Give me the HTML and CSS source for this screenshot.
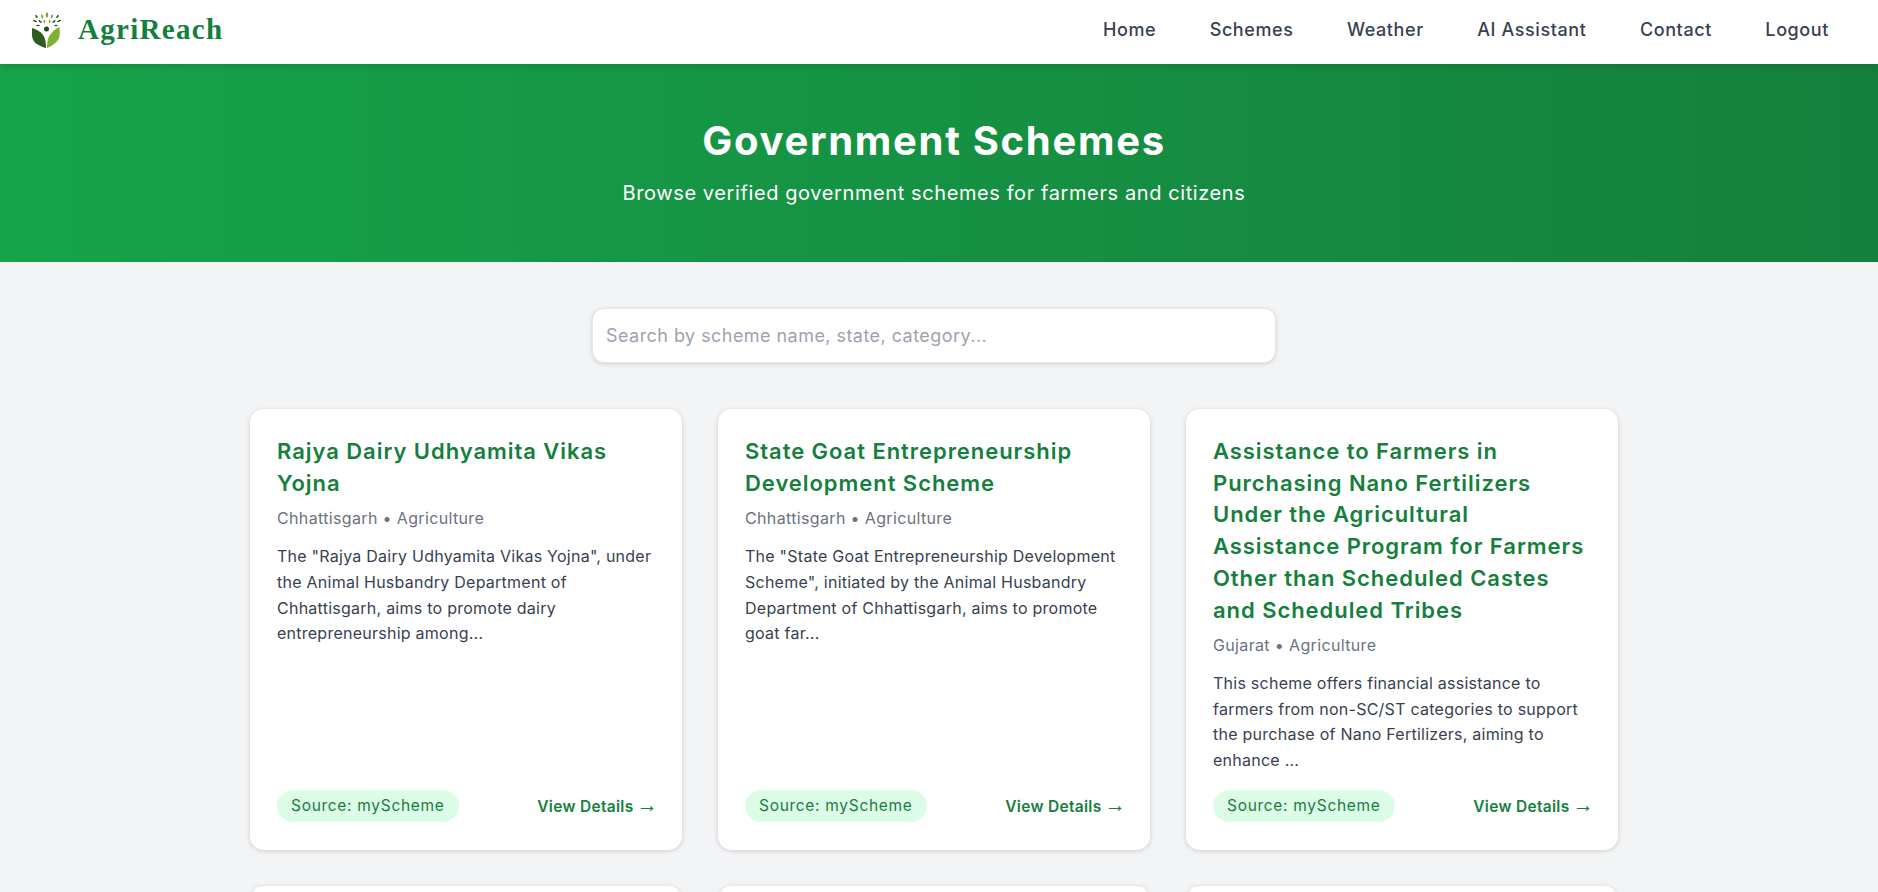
FILE: index.html
```html
<!DOCTYPE html>
<html lang="en">
<head>
    <meta charset="UTF-8">
    <meta name="viewport" content="width=device-width, initial-scale=1.0">
    <title>Government Schemes - AgriReach</title>
    <link rel="stylesheet" href="styles.css">
</head>
<body>
    <header class="navbar">
        <a class="brand" href="#">
            <svg class="brand-logo" viewBox="0 0 30 36" aria-hidden="true">
                <g fill="#6fa52c">
                    <path d="M15 0c1.600 1.600 1.600 4 0 6-1.600-2-1.600-4.400 0-6z"/>
                    <path d="M9.500 2c1.500 1 2 3 1.300 4.800-1.600-1-2.200-3-1.300-4.800z"/>
                    <path d="M20.500 2c-1.500 1-2 3-1.300 4.800 1.600-1 2.200-3 1.300-4.800z"/>
                    <path d="M12 7.500c1.300 1 1.500 2.600.8 4-1.300-1-1.600-2.600-.8-4z"/>
                    <path d="M18 7.500c-1.300 1-1.500 2.600-.8 4 1.300-1 1.600-2.600.8-4z"/>
                </g>
                <g fill="#2f5d1e">
                    <ellipse cx="4.500" cy="4.500" rx="1" ry="1.700" transform="rotate(-35 4.500 4.500)"/>
                    <ellipse cx="25.500" cy="4.500" rx="1" ry="1.700" transform="rotate(35 25.500 4.500)"/>
                    <ellipse cx="3" cy="9" rx="2.300" ry=".9" transform="rotate(20 3 9)"/>
                    <ellipse cx="27" cy="9" rx="2.300" ry=".9" transform="rotate(-20 27 9)"/>
                    <ellipse cx="8" cy="9.500" rx="2" ry=".9" transform="rotate(35 8 9.500)"/>
                    <ellipse cx="22" cy="9.500" rx="2" ry=".9" transform="rotate(-35 22 9.500)"/>
                    <ellipse cx="6" cy="13.500" rx="2" ry=".8"/>
                    <ellipse cx="24" cy="13.500" rx="2" ry=".8"/>
                </g>
                <circle cx="14.500" cy="17" r="2.500" fill="#1f4d1a"/>
                <path d="M0 16c4 1 8 3 11 7 2.500 3.500 3 8 3 13C6 34 0 30 0 23z" fill="#2f5d1e"/>
                <path d="M27.500 15c0 0 .5 5 .2 8-.6 6-6.200 10.500-12.700 13 0-5 .5-9.500 3-13 2.500-3.500 5.500-6.500 9.500-8z" fill="#7fb02e"/>
            </svg>
            <span class="brand-name">AgriReach</span>
        </a>
        <nav class="nav-links">
            <a href="#">Home</a>
            <a href="#">Schemes</a>
            <a href="#">Weather</a>
            <a href="#">AI Assistant</a>
            <a href="#">Contact</a>
            <a href="#">Logout</a>
        </nav>
    </header>

    <section class="hero">
        <h1>Government Schemes</h1>
        <p>Browse verified government schemes for farmers and citizens</p>
    </section>

    <div class="content">
        <div class="search-wrap">
            <input class="search-input" type="text" placeholder="Search by scheme name, state, category...">
        </div>

        <main class="scheme-grid">
            <article class="scheme-card">
                <h3>Rajya Dairy Udhyamita Vikas Yojna</h3>
                <div class="scheme-meta">Chhattisgarh • Agriculture</div>
                <p class="scheme-desc">The "Rajya Dairy Udhyamita Vikas Yojna", under the Animal Husbandry Department of Chhattisgarh, aims to promote dairy entrepreneurship among...</p>
                <div class="scheme-footer">
                    <span class="source-badge">Source: myScheme</span>
                    <a class="details-link" href="#">View Details <span class="arrow">→</span></a>
                </div>
            </article>
            <article class="scheme-card">
                <h3>State Goat Entrepreneurship Development Scheme</h3>
                <div class="scheme-meta">Chhattisgarh • Agriculture</div>
                <p class="scheme-desc">The "State Goat Entrepreneurship Development Scheme", initiated by the Animal Husbandry Department of Chhattisgarh, aims to promote goat far...</p>
                <div class="scheme-footer">
                    <span class="source-badge">Source: myScheme</span>
                    <a class="details-link" href="#">View Details <span class="arrow">→</span></a>
                </div>
            </article>
            <article class="scheme-card">
                <h3>Assistance to Farmers in Purchasing Nano Fertilizers Under the Agricultural Assistance Program for Farmers Other than Scheduled Castes and Scheduled Tribes</h3>
                <div class="scheme-meta">Gujarat • Agriculture</div>
                <p class="scheme-desc">This scheme offers financial assistance to farmers from non-SC/ST categories to support the purchase of Nano Fertilizers, aiming to enhance ...</p>
                <div class="scheme-footer">
                    <span class="source-badge">Source: myScheme</span>
                    <a class="details-link" href="#">View Details <span class="arrow">→</span></a>
                </div>
            </article>
            <article class="scheme-card"></article>
            <article class="scheme-card"></article>
            <article class="scheme-card"></article>
        </main>
    </div>
</body>
</html>
```

FILE: styles.css
```css
html, body {
    height: 100%;
    overflow: hidden;
}
body {
    font-family: Inter, "Open Sans", sans-serif;
    margin: 0;
    padding: 0;
    background-color: #f3f4f6;
    color: #374151;
}
a {
    text-decoration: none;
}
.navbar {
    height: 64px;
    background-color: white;
    display: flex;
    align-items: center;
    justify-content: space-between;
    padding: 0 49px 5px 32px;
    box-sizing: border-box;
    position: relative;
    box-shadow: 0 2px 6px rgba(0, 0, 0, 0.15);
}
.brand {
    display: flex;
    align-items: center;
    gap: 16px;
}
.brand-logo {
    width: 30px;
    height: 36px;
}
.brand-name {
    font-family: "Liberation Serif", serif;
    font-size: 29px;
    font-weight: bold;
    color: #15803d;
    letter-spacing: 1.3px;
}
.nav-links {
    display: flex;
    gap: 53.400px;
}
.nav-links a {
    font-size: 18px;
    font-weight: 500;
    letter-spacing: 0.6px;
    color: #374151;
}
.hero {
    height: 198px;
    box-sizing: border-box;
    padding: 53px 10px 0 0;
    text-align: center;
    color: white;
    background: linear-gradient(90deg, #16a34a, #15803d);
}
.hero h1 {
    font-size: 40px;
    line-height: 48px;
    font-weight: 700;
    letter-spacing: 1.7px;
    margin: 0 0 14px;
}
.hero p {
    font-size: 20px;
    line-height: 28px;
    letter-spacing: 0.6px;
    margin: 0;
}
.content {
    padding-right: 10px;
}
.search-wrap {
    display: flex;
    justify-content: center;
    padding-top: 46px;
}
.search-input {
    width: 684px;
    height: 55px;
    box-sizing: border-box;
    padding: 0 13px;
    border: 1px solid #e5e7eb;
    border-radius: 12px;
    background-color: white;
    font-family: inherit;
    font-size: 18px;
    letter-spacing: 0.45px;
    box-shadow: 0 1px 4px rgba(0, 0, 0, 0.15);
}
.search-input::placeholder {
    color: #9ca3af;
}
.scheme-grid {
    display: grid;
    grid-template-columns: repeat(3, 432px);
    grid-auto-rows: 441px;
    gap: 36px;
    justify-content: center;
    margin-top: 46px;
}
.scheme-card {
    background-color: white;
    border-radius: 14px;
    padding: 27px 27px 28px;
    display: flex;
    flex-direction: column;
    box-sizing: border-box;
    box-shadow: 0 1px 5px rgba(0, 0, 0, 0.16);
}
.scheme-card h3 {
    font-size: 22px;
    line-height: 31.700px;
    font-weight: 600;
    letter-spacing: 0.95px;
    color: #15803d;
    margin: 0 0 7px;
}
.scheme-meta {
    font-size: 16px;
    line-height: 24px;
    letter-spacing: 0.35px;
    color: #6b7280;
    margin-bottom: 14px;
}
.scheme-desc {
    font-size: 16px;
    line-height: 25.600px;
    letter-spacing: 0.25px;
    margin: 0;
}
.scheme-footer {
    margin-top: auto;
    display: flex;
    align-items: center;
    justify-content: space-between;
}
.source-badge {
    font-size: 15.500px;
    line-height: 32px;
    letter-spacing: 0.7px;
    padding: 0 14px;
    border-radius: 16px;
    background-color: #dcfce7;
    color: #15803d;
    white-space: nowrap;
}
.details-link {
    font-size: 15.500px;
    font-weight: 600;
    letter-spacing: 0.3px;
    color: #15803d;
    white-space: nowrap;
}
.arrow {
    font-family: "Liberation Serif", serif;
    font-weight: normal;
    font-size: 21px;
    line-height: 0;
    margin-left: -1px;
    margin-right: -3px;
}
```
